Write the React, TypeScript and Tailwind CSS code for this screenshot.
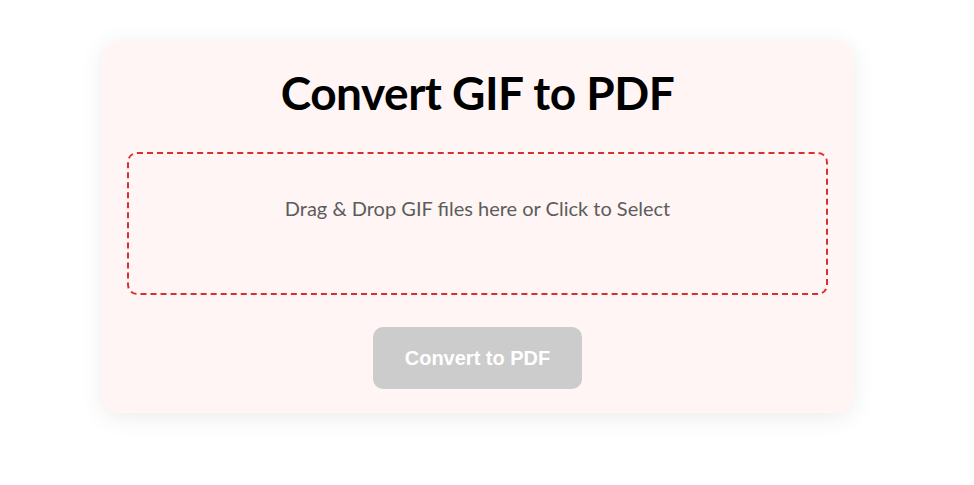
import React from "react";

export default function App() {
  return (
    <div className="min-h-[485px] w-full bg-white pt-[41px]" style={{ fontFamily: "Lato, 'Noto Sans', sans-serif" }}>
      <div className="ml-[102px] w-[751px] rounded-[16px] bg-[#fff5f5] px-[25px] pt-[25px] pb-[24px] shadow-[0_4px_24px_rgba(0,0,0,0.08)]">
        <h1 className="m-0 text-center text-[46px] font-bold leading-[54px] tracking-[-0.5px] text-black">
          Convert GIF to PDF
        </h1>
        <div className="mt-[32px] h-[143px] cursor-pointer rounded-[10px] border-2 border-dashed border-[#d9302f] pt-[41px] text-center">
          <p className="m-0 text-[20px] leading-[27px] text-[#5c5c5c]">
            Drag &amp; Drop GIF files here or Click to Select
          </p>
        </div>
        <div className="mt-[32px] flex justify-center">
          <button
            className="h-[62px] w-[209px] rounded-[10px] bg-[#cccccc] text-[20px] font-bold text-white"
            style={{ fontFamily: "'Liberation Sans', Arial, sans-serif" }}
            disabled
          >
            Convert to PDF
          </button>
        </div>
      </div>
    </div>
  );
}
